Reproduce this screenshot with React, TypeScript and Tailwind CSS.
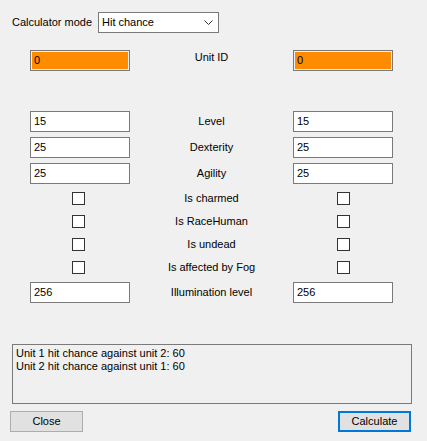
import React from "react";

const Box = ({ value, orange }: { value: string; orange?: boolean }) => (
  <div
    className={`h-[21px] w-[100px] border border-[#7a7a7a] flex items-center pl-[3px] ${
      orange ? "bg-[#ff8c00] shadow-[inset_0_0_0_1px_#f0f0f0]" : "bg-white"
    }`}
  >
    {value}
  </div>
);

const Check = ({ left }: { left?: boolean }) => (
  <div className={`flex justify-center ${left ? "pr-[4px]" : ""}`}>
    <div className="w-[13px] h-[13px] border border-[#333333] bg-white" />
  </div>
);

const Row = ({ label, value }: { label: string; value: string }) => (
  <div className="grid grid-cols-[100px_1fr_100px] items-center h-[21px]">
    <Box value={value} />
    <div className="text-center">{label}</div>
    <Box value={value} />
  </div>
);

const CheckRow = ({ label }: { label: string }) => (
  <div className="grid grid-cols-[100px_1fr_100px] items-center h-[13px]">
    <Check left />
    <div className="text-center">{label}</div>
    <Check />
  </div>
);

const App = () => {
  return (
    <div className="w-[427px] h-[441px] bg-[#f0f0f0] text-[11px] text-black font-['Liberation_Sans',Arial,sans-serif] overflow-hidden">
      <div className="flex items-center pt-[12px] pl-[12px] h-[33px]">
        <div className="w-[86px]">Calculator mode</div>
        <div className="w-[121px] h-[21px] bg-white border border-[#7a7a7a] flex items-center justify-between pl-[3px] pr-[5px]">
          <span>Hit chance</span>
          <svg width="9" height="6" viewBox="0 0 9 6" fill="none">
            <path d="M0.5 0.5 L4.5 4.5 L8.5 0.5" stroke="#333" strokeWidth="1" />
          </svg>
        </div>
      </div>

      <div className="pl-[30px] pr-[34px]">
        <div className="grid grid-cols-[100px_1fr_100px] items-start h-[21px] mt-[17px]">
          <Box value="0" orange />
          <div className="text-center -mt-[1px]">Unit ID</div>
          <Box value="0" orange />
        </div>

        <div className="flex flex-col gap-[5px] mt-[40px]">
          <Row label="Level" value="15" />
          <Row label="Dexterity" value="25" />
          <Row label="Agility" value="25" />
        </div>

        <div className="flex flex-col gap-[10px] mt-[6px]">
          <CheckRow label="Is charmed" />
          <CheckRow label="Is RaceHuman" />
          <CheckRow label="Is undead" />
          <CheckRow label="Is affected by Fog" />
        </div>

        <div className="mt-[10px]">
          <Row label="Illumination level" value="256" />
        </div>
      </div>

      <div className="ml-[12px] mr-[15px] mt-[41px] h-[60px] border border-[#7a7a7a] bg-[#f0f0f0] px-[3px] pt-[2px] leading-[13px]">
        <div>Unit 1 hit chance against unit 2: 60</div>
        <div>Unit 2 hit chance against unit 1: 60</div>
      </div>

      <div className="flex justify-between pl-[10px] pr-[16px] mt-[7px]">
        <button className="w-[73px] h-[21px] bg-[#e1e1e1] border border-[#adadad]">Close</button>
        <button className="w-[73px] h-[21px] bg-[#e1e1e1] border-2 border-[#0078d7]">Calculate</button>
      </div>
    </div>
  );
};

export default App;
